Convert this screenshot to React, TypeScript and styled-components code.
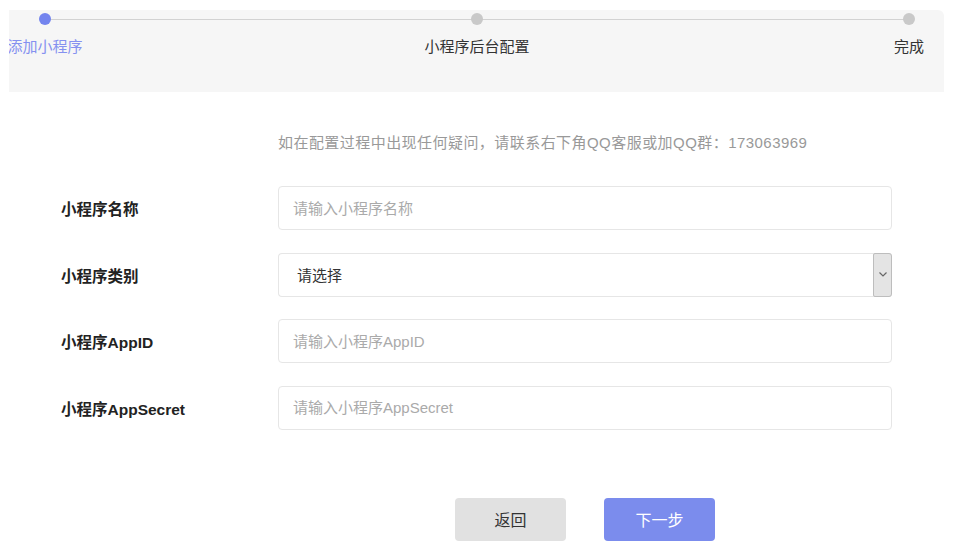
import React from "react";
import styled, { createGlobalStyle } from "styled-components";

const Global = createGlobalStyle`
  html, body { margin: 0; padding: 0; background: #fff; }
  body { font-family: "Liberation Sans", "Noto Sans CJK SC", sans-serif; color: #333; }
  * { box-sizing: border-box; }
`;

const Page = styled.div`
  width: 953px;
  height: 549px;
  padding: 10px 9px 0 9px;
  overflow: hidden;
`;

const StepPanel = styled.div`
  height: 82px;
  background: #f6f6f6;
  border-radius: 0 6px 0 0;
  overflow: hidden;
  padding: 3px 35px 0 36px;
`;

const Track = styled.div`
  position: relative;
  display: flex;
  justify-content: space-between;
  &::before {
    content: "";
    position: absolute;
    left: 0;
    right: 0;
    top: 5.5px;
    height: 1px;
    background: #d2d2d2;
  }
`;

const Step = styled.div`
  width: 0;
  display: flex;
  flex-direction: column;
  align-items: center;
  gap: 11px;
`;

const Dot = styled.span<{ $active?: boolean }>`
  position: relative;
  flex: none;
  width: 12px;
  height: 12px;
  border-radius: 50%;
  background: ${(p) => (p.$active ? "#7384ee" : "#c9c9c9")};
`;

const StepLabel = styled.span<{ $active?: boolean }>`
  white-space: nowrap;
  font-size: 15px;
  line-height: 21px;
  color: ${(p) => (p.$active ? "#8591f0" : "#333")};
`;

const Body = styled.div`
  padding: 0 0 0 52px;
`;

const Hint = styled.p`
  margin: 40px 0 0 217px;
  font-size: 15px;
  line-height: 21px;
  letter-spacing: 0.45px;
  color: #999;
  white-space: nowrap;
`;

const Form = styled.div`
  margin-top: 33px;
  display: grid;
  grid-template-columns: 217px 614px;
  row-gap: 22.5px;
  align-items: center;
`;

const Label = styled.label`
  font-size: 15.5px;
  font-weight: bold;
  color: #222;
`;

const Input = styled.input`
  height: 44px;
  width: 100%;
  border: 1px solid #e6e6e6;
  border-radius: 4px;
  padding: 0 14px;
  font-size: 15px;
  font-family: inherit;
  color: #333;
  outline: none;
  &::placeholder { color: #aaa; }
`;

const SelectBox = styled.div`
  height: 44px;
  display: flex;
  align-items: stretch;
  border: 1px solid #e6e6e6;
  border-right: none;
  border-radius: 4px 3px 3px 4px;
`;

const SelectValue = styled.span`
  flex: 1;
  display: flex;
  align-items: center;
  padding-left: 18px;
  font-size: 15px;
  color: #333;
`;

const ArrowBox = styled.span`
  width: 19px;
  margin: -1px 0;
  display: flex;
  align-items: center;
  justify-content: center;
  background: #e4e4e4;
  border: 1px solid #bdbdbd;
  border-radius: 2px 3px 3px 2px;
`;

const Actions = styled.div`
  margin: 68px 0 0 217px;
  width: 614px;
  display: flex;
  justify-content: center;
  gap: 38px;
`;

const Button = styled.button<{ $primary?: boolean }>`
  width: 111px;
  height: 43px;
  border: none;
  border-radius: 4px;
  font-family: inherit;
  font-size: 16px;
  background: ${(p) => (p.$primary ? "#7b8ced" : "#e1e1e1")};
  color: ${(p) => (p.$primary ? "#fff" : "#333")};
`;

const steps = ["添加小程序", "小程序后台配置", "完成"];

export default function App() {
  return (
    <Page>
      <Global />
      <StepPanel>
        <Track>
          {steps.map((s, i) => (
            <Step key={s}>
              <Dot $active={i === 0} />
              <StepLabel $active={i === 0}>{s}</StepLabel>
            </Step>
          ))}
        </Track>
      </StepPanel>
      <Body>
        <Hint>如在配置过程中出现任何疑问，请联系右下角QQ客服或加QQ群：173063969</Hint>
        <Form>
          <Label>小程序名称</Label>
          <Input placeholder="请输入小程序名称" />
          <Label>小程序类别</Label>
          <SelectBox>
            <SelectValue>请选择</SelectValue>
            <ArrowBox>
              <svg width="10" height="7" viewBox="0 0 10 7">
                <path d="M1.5 1.5l3.5 3.5 3.5-3.5" fill="none" stroke="#666" strokeWidth="1.2" />
              </svg>
            </ArrowBox>
          </SelectBox>
          <Label>小程序AppID</Label>
          <Input placeholder="请输入小程序AppID" />
          <Label>小程序AppSecret</Label>
          <Input placeholder="请输入小程序AppSecret" />
        </Form>
        <Actions>
          <Button>返回</Button>
          <Button $primary>下一步</Button>
        </Actions>
      </Body>
    </Page>
  );
}
